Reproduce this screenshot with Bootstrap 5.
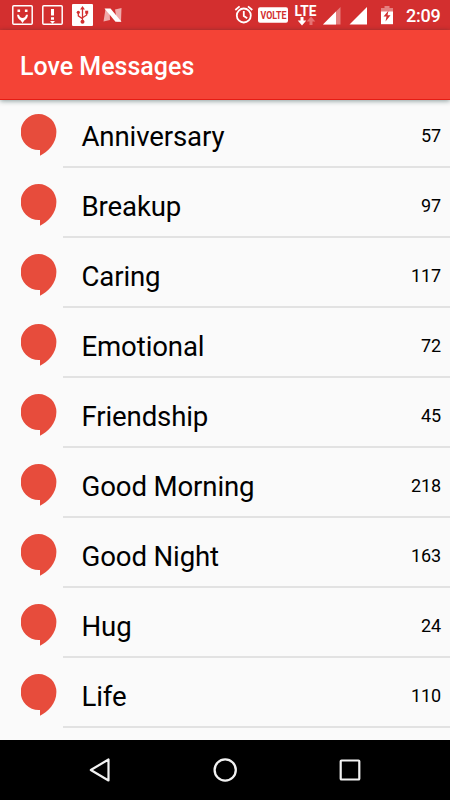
<!DOCTYPE html>
<html lang="en">
<head>
<meta charset="utf-8">
<meta name="viewport" content="width=device-width, initial-scale=1">
<title>Love Messages</title>
<link href="https://cdn.jsdelivr.net/npm/bootstrap@5.3.0/dist/css/bootstrap.min.css" rel="stylesheet">
<style>
  body { font-family: Roboto, "Liberation Sans", sans-serif; background: #fafafa; color: #000; }
  .status-bar { height: 30px; background: #d32f2f; color: #fff; }
  .status-bar svg { display: block; height: 30px; flex: none; }
  .clock { width: 49px; padding-left: 5px; font-size: 18px; font-weight: 500; letter-spacing: -.2px; line-height: 32px; height: 30px; white-space: nowrap; }
  .app-bar { height: 70px; padding: 3px 20px 0; background: #f44336; border-bottom: 1px solid #e51c14; box-shadow: 0 1px 5px rgba(0,40,40,.45); z-index: 2; }
  .app-title { font-size: 25px; font-weight: 500; line-height: 1; color: #fff; }
  .topics { margin-top: -2px; }
  .topic { height: 70px; padding-left: 21px; }
  .topic > svg { width: 36px; height: 43px; margin: 16px 6px 0 0; flex: none; }
  .topic-line { border-bottom: 2px solid #e2e2e2; padding: 7px 9px 0 18.5px; }
  .topic-name { font-size: 27.6px; letter-spacing: -.13px; line-height: 1; padding-top: 2px; }
  .topic-count { font-size: 18px; line-height: 1; letter-spacing: -.1px; }
  .nav-keys { height: 60px; background: #000; }
</style>
</head>
<body>
<svg class="d-none">
  <symbol id="bubble" viewBox="0 0 36 43"><path d="M17.7 0A17.8 17.8 0 0 1 35.4 18C35.4 29.5 27 38 19 41.7V36H17.7A17.9 17.9 0 0 1 17.7 0Z" fill="#e74c3c"/></symbol>
</svg>
<div class="vh-100 d-flex flex-column overflow-hidden">
  <div class="status-bar d-flex justify-content-between flex-shrink-0">
    <div class="d-flex">
      <svg width="38" viewBox="0 0 38 30"><rect x="12.8" y="5.7" width="19.4" height="18.6" rx="1" fill="none" stroke="#fff" stroke-width="1.5"/><path d="M17 14.8H19C19.500 17.300 21 18 22.500 18S25.500 17.300 26 14.800H28C27.500 18.500 25.500 20 24.500 20.300L22.500 23 20.500 20.300C19.500 20 17.500 18.500 17 14.800ZM17.500 9.500h2.600v2.600h-2.600zM24.900 9.500h2.600v2.600h-2.600z" fill="#fff"/></svg>
      <svg width="30" viewBox="38 0 30 30"><rect x="42.8" y="5.7" width="19.4" height="18.6" rx="1" fill="none" stroke="#fff" stroke-width="1.5"/><path d="M51 9h3v6.500h-3zM51 17.300h3v2.500h-3zM50 21h5l-2.500 2.700z" fill="#fff"/></svg>
      <svg width="30" viewBox="68 0 30 30"><rect x="72" y="4" width="21" height="22" rx="1" fill="#fff"/><g fill="none" stroke="#d32f2f" stroke-width="1.3"><path d="M82.500 8v13M78.300 12.500v3.300l4.200 3M86.700 12.500v2.500l-4.200 2.800"/></g><g fill="#d32f2f"><path d="m82.500 6 2.400 3.500h-4.800z"/><circle cx="82.500" cy="21.700" r="2"/><circle cx="78.300" cy="12.300" r="1.600"/><path d="M85.200 10.700h3v3h-3z"/></g></svg>
      <svg width="26" viewBox="98 0 26 30"><path d="M105.500 9h4l.5 11-6.500 1.500zM115 9.500l6.500-1.500-.5 13.500h-4z" fill="#efaaaa"/><path d="M104.500 8.500h6l11 13.300h-6z" fill="#fff"/></svg>
    </div>
    <div class="d-flex">
      <svg width="24" viewBox="231 0 24 30"><g fill="none" stroke="#fff" stroke-width="1.8"><circle cx="243.800" cy="15.500" r="7"/><path d="M243.800 11v5l3.400 2.200M235.300 10l4.300-3.600M248 6.400l4.300 3.600"/></g></svg>
      <svg width="36" viewBox="255 0 36 30"><rect x="258" y="7.300" width="30" height="15.400" rx="2" fill="#fff"/><text x="260.5" y="18.700" textLength="26" lengthAdjust="spacingAndGlyphs" font-family="Roboto, sans-serif" font-size="10" font-weight="700" fill="#d32f2f">VOLTE</text></svg>
      <svg width="29" viewBox="291 0 29 30"><text x="294.500" y="16" textLength="22" lengthAdjust="spacingAndGlyphs" font-family="Roboto, sans-serif" font-size="14" font-weight="700" fill="#fff">LTE</text><path d="M300.500 17h3v3.500h2.800l-4.300 5-4.300-5h2.800z" fill="#fff"/><path d="M309.500 25h3v-3.500h2.800l-4.300-5-4.300 5h2.800z" fill="#e57373"/></svg>
      <svg width="26" viewBox="320 0 26 30"><path d="M340.500 7v17.500H323z" fill="#e57f7f"/><path d="M336 11.500v13h-13z" fill="#fff"/></svg>
      <svg width="30" viewBox="346 0 30 30"><path d="M367 7v17.500H349.500z" fill="#fff"/></svg>
      <svg width="25" viewBox="376 0 25 30"><path d="M381 8h3.500V6h5v2h3.500v4h-12z" fill="#e58080"/><path d="M381 11.500h12v12.700h-12z" fill="#fff"/><path d="m388.500 10.500-5 6h3l-1 5 5-6.300h-3z" fill="#d32f2f"/></svg>
      <div class="clock">2:09</div>
    </div>
  </div>

  <header class="app-bar d-flex align-items-center flex-shrink-0 position-relative">
    <h1 class="app-title m-0">Love Messages</h1>
  </header>

  <main class="flex-grow-1 overflow-hidden">
    <ul class="topics list-unstyled mb-0">
      <li class="topic d-flex"><svg><use href="#bubble"/></svg><div class="topic-line flex-grow-1 d-flex align-items-center justify-content-between"><span class="topic-name">Anniversary</span><span class="topic-count">57</span></div></li>
      <li class="topic d-flex"><svg><use href="#bubble"/></svg><div class="topic-line flex-grow-1 d-flex align-items-center justify-content-between"><span class="topic-name">Breakup</span><span class="topic-count">97</span></div></li>
      <li class="topic d-flex"><svg><use href="#bubble"/></svg><div class="topic-line flex-grow-1 d-flex align-items-center justify-content-between"><span class="topic-name">Caring</span><span class="topic-count">117</span></div></li>
      <li class="topic d-flex"><svg><use href="#bubble"/></svg><div class="topic-line flex-grow-1 d-flex align-items-center justify-content-between"><span class="topic-name">Emotional</span><span class="topic-count">72</span></div></li>
      <li class="topic d-flex"><svg><use href="#bubble"/></svg><div class="topic-line flex-grow-1 d-flex align-items-center justify-content-between"><span class="topic-name">Friendship</span><span class="topic-count">45</span></div></li>
      <li class="topic d-flex"><svg><use href="#bubble"/></svg><div class="topic-line flex-grow-1 d-flex align-items-center justify-content-between"><span class="topic-name">Good Morning</span><span class="topic-count">218</span></div></li>
      <li class="topic d-flex"><svg><use href="#bubble"/></svg><div class="topic-line flex-grow-1 d-flex align-items-center justify-content-between"><span class="topic-name">Good Night</span><span class="topic-count">163</span></div></li>
      <li class="topic d-flex"><svg><use href="#bubble"/></svg><div class="topic-line flex-grow-1 d-flex align-items-center justify-content-between"><span class="topic-name">Hug</span><span class="topic-count">24</span></div></li>
      <li class="topic d-flex"><svg><use href="#bubble"/></svg><div class="topic-line flex-grow-1 d-flex align-items-center justify-content-between"><span class="topic-name">Life</span><span class="topic-count">110</span></div></li>
    </ul>
  </main>

  <nav class="nav-keys d-flex justify-content-center flex-shrink-0">
    <svg width="125" height="60" viewBox="0 0 125 60" fill="none" stroke="#f2f2f2" stroke-width="2.2"><path d="M70.500 19.500v21L52.800 30z" stroke-linejoin="round"/></svg>
    <svg width="125" height="60" viewBox="0 0 125 60" fill="none" stroke="#f2f2f2" stroke-width="2.3"><circle cx="62.200" cy="30" r="10.600"/></svg>
    <svg width="125" height="60" viewBox="0 0 125 60" fill="none" stroke="#f2f2f2" stroke-width="2.2"><rect x="52.700" y="20.500" width="18.600" height="19" rx=".8"/></svg>
  </nav>
</div>
<script src="https://cdn.jsdelivr.net/npm/bootstrap@5.3.0/dist/js/bootstrap.bundle.min.js"></script>
</body>
</html>
